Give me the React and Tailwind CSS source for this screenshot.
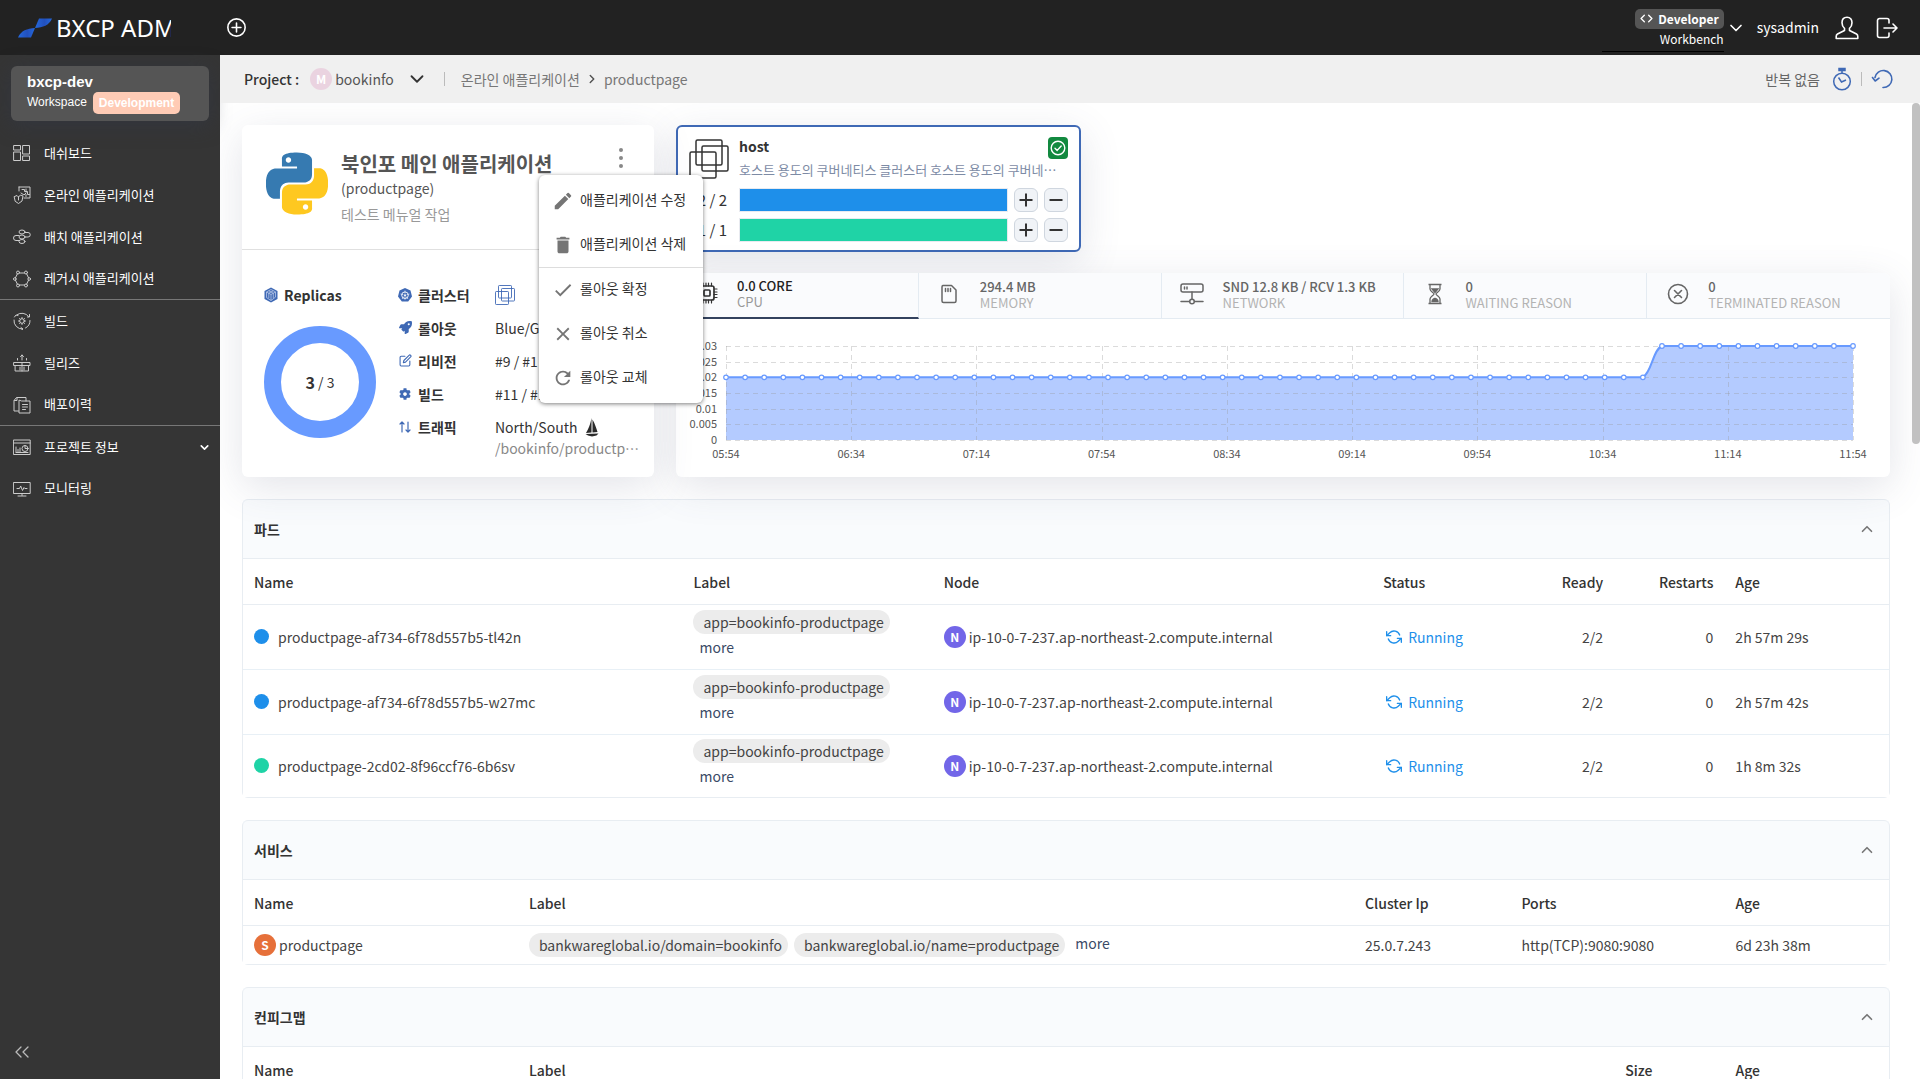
import React from "react";
import { Code, ChevronDown, ChevronUp, ChevronsLeft } from "lucide-react";
import { MdEdit, MdDelete, MdCheck, MdClose, MdRefresh } from "react-icons/md";
import { FaRocket, FaCog } from "react-icons/fa";
import { FiEdit, FiRefreshCcw } from "react-icons/fi";

const BLUE = "#1e8fea";
const GREEN = "#1fd3a6";

/* ---------- drawings ---------- */

function Svg({ size = 18, box = 18, className = "", children, sw = 1 }) {
  return (
    <svg
      width={size}
      height={size}
      viewBox={`0 0 ${box} ${box}`}
      fill="none"
      stroke="currentColor"
      strokeWidth={sw}
      strokeLinejoin="round"
      strokeLinecap="round"
      className={"shrink-0 " + className}
      aria-hidden="true"
    >
      {children}
    </svg>
  );
}

function BrandMark() {
  return (
    <svg width="34" height="20" viewBox="0 0 34 20" className="shrink-0" aria-hidden="true">
      <defs>
        <linearGradient id="mark" x1="0" y1="0" x2="1" y2="0">
          <stop offset="0" stopColor="#2468dc" />
          <stop offset="0.55" stopColor="#2250bd" />
          <stop offset="1" stopColor="#2468dc" />
        </linearGradient>
      </defs>
      <path d="M0 19.5C3 12.5 9 10.500 17 10L13 19.500z" fill="url(#mark)" />
      <path d="M34 0.500C31 7.500 25 9.500 17 10L21 0.500z" fill="url(#mark)" />
    </svg>
  );
}

function PythonLogo() {
  return (
    <svg width="62" height="63" viewBox="0 0 24 24" className="mt-px shrink-0" role="img" aria-label="Python">
      <path
        fill="#367ab1"
        d="M14.25.18l.9.2.73.26.59.3.45.32.34.34.25.34.16.33.1.3.04.26.02.2-.01.13V8.5l-.05.63-.13.55-.21.46-.26.38-.3.31-.33.25-.35.19-.35.14-.33.1-.3.07-.26.04-.21.02H8.77l-.69.05-.59.14-.5.22-.41.27-.33.32-.27.35-.2.36-.15.37-.1.35-.07.32-.04.27-.02.21v3.06H3.17l-.21-.03-.28-.07-.32-.12-.35-.18-.36-.26-.36-.36-.35-.46-.32-.59-.28-.73-.21-.88-.14-1.05-.05-1.23.06-1.22.16-1.04.24-.87.32-.71.36-.57.4-.44.42-.33.42-.24.4-.16.36-.1.32-.05.24-.01h.16l.06.01h8.16v-.83H6.18l-.01-2.75-.02-.37.05-.34.11-.31.17-.28.25-.26.31-.23.38-.2.44-.18.51-.15.58-.12.64-.1.71-.06.77-.04.84-.02 1.27.05zm-6.3 1.98l-.23.33-.08.41.08.41.23.34.33.22.41.09.41-.09.33-.22.23-.34.08-.41-.08-.41-.23-.33-.33-.22-.41-.09-.41.09z"
      />
      <path
        fill="#fec820"
        d="M21.04 6.11l.28.06.32.12.35.18.36.27.36.35.35.47.32.59.28.73.21.88.14 1.04.05 1.23-.06 1.23-.16 1.04-.24.86-.32.71-.36.57-.4.45-.42.33-.42.24-.4.16-.36.09-.32.05-.24.02-.16-.01h-8.22v.82h5.84l.01 2.76.02.36-.05.34-.11.31-.17.29-.25.25-.31.24-.38.2-.44.17-.51.15-.58.13-.64.09-.71.07-.77.04-.84.01-1.27-.04-1.07-.14-.9-.2-.73-.25-.59-.3-.45-.33-.34-.34-.25-.34-.16-.33-.1-.3-.04-.25-.02-.2.01-.13v-5.34l.05-.64.13-.54.21-.46.26-.38.3-.32.33-.24.35-.2.35-.14.33-.1.3-.06.26-.04.21-.02.13-.01h5.84l.69-.05.59-.14.5-.21.41-.28.33-.32.27-.35.2-.36.15-.36.1-.35.07-.32.04-.28.02-.21V6.07h2.09l.14.01zm-6.47 14.25l-.23.33-.08.41.08.41.23.33.33.23.41.08.41-.08.33-.23.23-.33.08-.41-.08-.41-.23-.33-.33-.23-.41-.08-.41.08z"
      />
    </svg>
  );
}

function ClusterSquares({ size = 20, sw = 1.2, className = "" }) {
  return (
    <svg width={size} height={size} viewBox="0 0 40 40" fill="none" stroke="currentColor" strokeWidth={sw} className={"shrink-0 " + className} aria-hidden="true">
      <rect x="7" y="1" width="26" height="25" rx="1.500" />
      <rect x="13" y="7" width="26" height="25" rx="1.500" />
      <rect x="1" y="13" width="26" height="26" rx="1.500" />
    </svg>
  );
}

const DashboardIcon = () => (
  <Svg>
    <path d="M1 1.500h6.500v4.500H1zM1 8h6.500v8.500H1zM10 1.500h6.500v8.500H10zM10 12h6.500v4.500H10z" />
  </Svg>
);
const OnlineIcon = () => (
  <Svg>
    <path d="M6 1h11v11h-6M6 1v4M9 3.500h2.500v2h3v3h2M8 7l3 2 2-2M1.500 10.500l2.500-1 1.500 1.500 2-2 2.500 1-1 5-3.500 2.500-3-2zM5.500 11v3M13 3v3M13 8.500v2" />
  </Svg>
);
const BatchIcon = () => (
  <Svg>
    <ellipse cx="9" cy="4" rx="3" ry="2" />
    <ellipse cx="9" cy="9" rx="3" ry="2" />
    <ellipse cx="9" cy="13.500" rx="3" ry="2" />
    <path d="M12 4.500h3a2 2 0 0 1 0 4.500h-3M6 7.500H3a2.500 2.500 0 0 0 0 5h3" />
  </Svg>
);
const LegacyIcon = () => (
  <Svg>
    <circle cx="5" cy="2.500" r="1.500" />
    <circle cx="13" cy="2.500" r="1.500" />
    <circle cx="1.800" cy="9" r="1.300" />
    <circle cx="16.200" cy="9" r="1.300" />
    <circle cx="5" cy="15.500" r="1.500" />
    <circle cx="13" cy="15.500" r="1.500" />
    <path d="M6.500 3h5M6.500 15h5M4.300 4L2.500 7.700M13.700 4l1.800 3.700M4.300 14l-1.800-3.700M13.700 14l1.800-3.700" />
  </Svg>
);
const BuildIcon = () => (
  <Svg>
    <path d="M4 2.800A8 8 0 0 1 15.500 4.500M17 8.500a8 8 0 0 1-4.500 7.500M9.500 17A8 8 0 0 1 1 8" />
    <circle cx="9" cy="9" r="2.300" />
    <path d="M9 5.500v1M9 11.500v1M5.500 9h1M11.500 9h1M6.500 6.500l.7.700M10.800 10.800l.7.700M11.500 6.500l-.7.700M6.500 11.500l.7-.7M1.500 5l1.500-2 2 .5M16.500 2.500v2.500h-2M8 15.500l2 1.500-1.500 1" />
  </Svg>
);
const ReleaseIcon = () => (
  <Svg>
    <path d="M1 8.500h16v3H1zM2.500 11.500h13v5.500h-13zM9 8.500V17M9 6V1M7.500 2.500L9 1l1.500 1.500M4.500 6V4.500M13.500 6V4.500M7 13v3M11 13v3" />
  </Svg>
);
const HistoryIcon = () => (
  <Svg>
    <path d="M5.500 15H1V4.500L3.500 1.500H9M6 4.500V17h11V5H9zM9 1.500l4 0V5M1.500 4.500h2.500v-2.500M9.500 8.500h5M9.500 11h5M9.500 13.500h3" />
  </Svg>
);
const ProjectIcon = () => (
  <Svg>
    <path d="M.8 2h16.400v14.500H.8zM.8 5h16.400M3 14V9M5 14v-2.500M7 14V10" />
    <circle cx="12" cy="10.500" r="3" />
    <path d="M12 7.500v3h3M3 14.500h12" />
  </Svg>
);
const MonitorIcon = () => (
  <Svg>
    <path d="M.8 2.500h16.400v11H.8zM9 13.500v2M5 16h8M4 8.500h2.500l1.200-2.500 1.800 4.500 1.500-3 .8 1H14" />
  </Svg>
);

const UserIcon = () => (
  <Svg size={24} box={24} sw={1.6}>
    <path d="M12 1.200c-3.300 0-5 2.500-5 5.600 0 2.200 1 4.300 2.500 5.500v2.200L2.500 18c-.9.500-1.300 1.500-1.300 2.500v2h21.600v-2c0-1-.4-2-1.300-2.500l-7-3.500v-2.200C16 11.100 17 9 17 6.800c0-3.100-1.700-5.600-5-5.600z" />
  </Svg>
);
const LogoutIcon = () => (
  <Svg size={22} box={22} sw={1.6}>
    <path d="M13 6V3.500a2 2 0 0 0-2-2H3.500a2 2 0 0 0-2 2v15a2 2 0 0 0 2 2H11a2 2 0 0 0 2-2V16M8 11h13M17 7l4 4-4 4" />
  </Svg>
);
const TimerIcon = () => (
  <svg width="20" height="24" viewBox="0 0 20 24" fill="none" stroke="#3f69b5" strokeWidth="1.500" className="shrink-0" aria-hidden="true">
    <circle cx="10" cy="14.500" r="8.300" />
    <path d="M10 6V3.500M6.500 10.500l3 4.500 4.500-2" />
    <rect x="7" y="1.500" width="6" height="2" fill="#3f69b5" />
  </svg>
);
const UndoIcon = () => (
  <Svg size={22} box={22} sw={1.6} className="text-[#3f69b5]">
    <path d="M12 19.500A8.500 8.500 0 1 0 4 9.500M1.500 9.500l2.700 3.500L8 10.200" />
  </Svg>
);

const CubeIcon = () => (
  <svg width="14" height="16" viewBox="0 0 14 16" className="shrink-0" aria-hidden="true">
    <path d="M7 .5l6.500 3.500v8L7 15.500.5 12V4z" fill="#3f69b5" />
    <path d="M7 2.500l4.500 2.400v5.200L7 13.500 2.500 10.500V5zM2.500 5L7 7.500 11.500 5M7 7.500v6M4.800 3.800l4.500 2.400v5M9.200 3.800L4.800 6.200v5" fill="none" stroke="#c5d3ee" strokeWidth=".7" />
  </svg>
);
const WheelIcon = () => (
  <svg width="14" height="14" viewBox="0 0 14 14" className="shrink-0" aria-hidden="true">
    <path d="M7 0l5.500 2.600L14 8.500 10.200 13.500H3.800L0 8.500l1.500-5.900z" fill="#3f69b5" />
    <circle cx="7" cy="7.200" r="3.300" fill="none" stroke="#fff" strokeWidth=".9" />
    <circle cx="7" cy="7.200" r="1" fill="#fff" />
    <path d="M7 2.500v3M7 8.500v3.300M2.500 6l3 .8M11.500 6l-3 .8M4 11l2-2.500M10 11L8 8.500" stroke="#fff" strokeWidth=".6" />
  </svg>
);
const TrafficIcon = () => (
  <Svg size={14} box={14} sw={1.2} className="text-[#3f69b5]">
    <path d="M4 12V2M2 4l2-2 2 2M10 2v10M8 10l2 2 2-2" />
  </Svg>
);
const SailIcon = () => (
  <svg width="14" height="20" viewBox="0 0 14 20" className="shrink-0" fill="#2b2b2b" aria-hidden="true">
    <path d="M6.500 1v14.500L1 16C3.500 12 5.500 7 6.500 1zM7.500 2.500c2.500 4.500 4 9 5 12.500l-5 .5zM.5 17L13.500 16.500 11.500 18.500 7 19.500 3 18.500z" />
  </svg>
);

const CpuIcon = () => (
  <Svg size={22} box={22} sw={1.7} className="text-[#333]">
    <rect x="4" y="4" width="14" height="14" rx="2" />
    <rect x="8" y="8" width="6" height="6" rx="1" />
    <path d="M7 1v3M10 1v3M12.500 1v3M15.500 1v3M7 18v3M10 18v3M12.500 18v3M15.500 18v3M1 7h3M1 10h3M1 12.500h3M1 15.500h3M18 7h3M18 10h3M18 12.500h3M18 15.500h3" strokeWidth="1.200" />
  </Svg>
);
const MemoryIcon = () => (
  <Svg size={22} box={22} sw={1.5} className="text-[#666]">
    <path d="M5 2.500h8.500L18 7v11a1.500 1.500 0 0 1-1.500 1.500h-11A1.500 1.500 0 0 1 4 18V4a1.500 1.500 0 0 1 1-1.500zM7.500 5.500v3M10 5.500v3M12.500 5.500v3" />
  </Svg>
);
const NetworkIcon = () => (
  <Svg size={24} box={24} sw={1.5} className="text-[#666]">
    <rect x="1" y="2" width="22" height="8" rx="2" />
    <path d="M4.500 5v2M7 5v2M12 10v7M1 19.500h8.500M14.500 19.500H23" />
    <circle cx="12" cy="19.500" r="2.300" />
  </Svg>
);
const HourglassIcon = () => (
  <svg width="22" height="22" viewBox="0 0 22 22" fill="none" stroke="#666" strokeWidth="1.300" className="shrink-0" aria-hidden="true">
    <path d="M4.500 1.500h13M4.500 20.500h13M6 1.500V6c0 2.500 4 3.500 4 5s-4 2.500-4 5v4.500M16 1.500V6c0 2.500-4 3.500-4 5s4 2.500 4 5v4.500" />
    <path d="M8 6h6l-3 3.500zM8 18.500c0-2 2-3 3-3s3 1 3 3z" fill="#666" />
  </svg>
);
const TerminatedIcon = () => (
  <Svg size={22} box={22} sw={1.6} className="text-[#666]">
    <circle cx="11" cy="11" r="9.500" />
    <path d="M7.500 7.500l7 7M14.500 7.500l-7 7" />
  </Svg>
);

/* ---------- header ---------- */

function Header() {
  return (
    <header className="flex h-[55px] shrink-0 items-center bg-[#222222] pr-[22px] pl-[18px] text-white">
      <a href="#home" className="flex w-[209px] items-center gap-1">
        <BrandMark />
        <span className="w-[115px] overflow-hidden font-['Noto_Sans',sans-serif] text-2xl leading-8 whitespace-nowrap">
          BXCP ADM
        </span>
      </a>
      <button type="button" aria-label="Add">
        <Svg size={19} box={18} sw={1.5}>
          <circle cx="9" cy="9" r="8.200" />
          <path d="M9 4.800v8.400M4.800 9h8.400" />
        </Svg>
      </button>
      <div className="ml-auto flex h-full items-center">
        <button type="button" className="flex items-center gap-[2px]">
          <span className="flex w-[122px] flex-col items-end border-b border-black pt-[5px] pb-[2px]">
            <span className="flex h-5 items-center gap-[5px] rounded-[5px] bg-[#555555] px-[5px] text-xs font-bold">
              <Code size={13} strokeWidth={2.5} />
              Developer
            </span>
            <span className="text-xs leading-5">Workbench</span>
          </span>
          <ChevronDown size={20} strokeWidth={2} />
        </button>
        <span className="ml-[11px] pb-[2px] text-sm">sysadmin</span>
        <button type="button" aria-label="Profile" className="ml-4">
          <UserIcon />
        </button>
        <button type="button" aria-label="Log out" className="ml-[17px]">
          <LogoutIcon />
        </button>
      </div>
    </header>
  );
}

/* ---------- sidebar ---------- */

const NAV = [
  [
    ["대쉬보드", DashboardIcon],
    ["온라인 애플리케이션", OnlineIcon],
    ["배치 애플리케이션", BatchIcon],
    ["레거시 애플리케이션", LegacyIcon],
  ],
  [
    ["빌드", BuildIcon],
    ["릴리즈", ReleaseIcon],
    ["배포이력", HistoryIcon],
  ],
  [
    ["프로젝트 정보", ProjectIcon, true],
    ["모니터링", MonitorIcon],
  ],
];

function Sidebar() {
  return (
    <aside className="flex w-[220px] shrink-0 flex-col bg-[#353535] text-white">
      <button
        type="button"
        className="m-[11px] flex h-[55px] flex-col items-start rounded-md bg-[#555555] px-4 pt-[6px] text-left font-['Liberation_Sans',sans-serif] shadow-[0_4px_20px_rgba(50,55,70,0.6)]"
      >
        <span className="text-[15px] leading-5 font-bold">bxcp-dev</span>
        <span className="flex items-center gap-[6px]">
          <span className="-mt-[2px] text-xs">Workspace</span>
          <span className="rounded-[5px] bg-[#ffcbb5] px-[6px] text-xs leading-[22px] font-bold text-white">
            Development
          </span>
        </span>
      </button>
      <nav>
        {NAV.map((group, i) => (
          <ul key={i} className="border-b border-[#777777] last:border-b-0">
            {group.map(([label, Icon, more]) => (
              <li key={label} className="flex h-[42px] last:h-[41px]">
                <a href="#nav" className="flex flex-1 items-center pr-[9px] pl-[13px] text-[13px]">
                  <span className="text-[#cccccc]">
                    <Icon />
                  </span>
                  <span className="ml-[13px]">{label}</span>
                  {more && <ChevronDown size={13} strokeWidth={3} className="ml-auto" />}
                </a>
              </li>
            ))}
          </ul>
        ))}
      </nav>
      <button type="button" aria-label="Collapse" className="mt-auto mb-[15px] ml-[10px] self-start text-[#bbbbbb]">
        <ChevronsLeft size={24} strokeWidth={1.3} />
      </button>
    </aside>
  );
}

/* ---------- project bar ---------- */

function ProjectBar() {
  return (
    <div className="flex h-12 shrink-0 items-center bg-[#f0f0f0] pr-[27px] pl-6 text-sm text-[#666666]">
      <span className="font-medium text-[#333333]">Project :</span>
      <button type="button" className="ml-[11px] flex items-center text-[#555555]">
        <span className="mr-[3px] flex size-[22px] items-center justify-center rounded-full bg-[#ead3e0] text-xs font-bold text-white">
          M
        </span>
        bookinfo
        <ChevronDown size={22} strokeWidth={2} className="ml-3 text-[#333333]" />
      </button>
      <span className="ml-4 h-[14px] w-px bg-[#bbbbbb]" />
      <nav className="ml-4 flex items-center text-[#777777]">
        <a href="#apps">온라인 애플리케이션</a>
        <ChevronDown size={14} strokeWidth={2.5} className="mx-[5px] -rotate-90 text-[#555555]" />
        <a href="#app">productpage</a>
      </nav>
      <div className="ml-auto flex items-center">
        <span>반복 없음</span>
        <button type="button" aria-label="Refresh interval" className="ml-3">
          <TimerIcon />
        </button>
        <span className="mx-[9px] h-[14px] w-px bg-[#bbbbbb]" />
        <button type="button" aria-label="Refresh">
          <UndoIcon />
        </button>
      </div>
    </div>
  );
}

/* ---------- application card ---------- */

const MENU = [
  [
    ["애플리케이션 수정", MdEdit],
    ["애플리케이션 삭제", MdDelete],
  ],
  [
    ["롤아웃 확정", MdCheck],
    ["롤아웃 취소", MdClose],
    ["롤아웃 교체", MdRefresh],
  ],
];

function ActionMenu() {
  return (
    <div
      role="menu"
      className="absolute top-[50px] left-[297px] z-20 w-[164px] rounded-md bg-white pt-1 pb-[3px] shadow-[0_1px_4px_rgba(0,0,0,0.5)]"
    >
      {MENU.map((group, i) => (
        <div key={i} className="border-b border-[#dddddd] last:border-b-0">
          {group.map(([label, Icon]) => (
            <button
              key={label}
              type="button"
              role="menuitem"
              className="flex h-11 w-full items-center gap-[6px] pl-[13px] text-sm whitespace-nowrap text-[#333333]"
            >
              <Icon size={22} className="shrink-0 text-[#757575]" />
              <span className="pb-1">{label}</span>
            </button>
          ))}
        </div>
      ))}
    </div>
  );
}

const CARD_SHADOW = "shadow-[0_10px_40px_rgba(80,90,120,0.16)]";

function Fact({ icon, label, children }) {
  return (
    <>
      <dt className="flex h-[33px] items-center gap-[6px] font-bold text-[#333333]">
        <span className="flex w-[14px] justify-center">{icon}</span>
        {label}
      </dt>
      <dd className="flex h-[33px] items-center gap-2">{children}</dd>
    </>
  );
}

function AppCard() {
  return (
    <section className={"relative w-1/4 shrink-0 rounded-md bg-white " + CARD_SHADOW}>
      <div className="flex h-[125px] border-b border-[#e0e0e0] pt-[26px] pr-[22px] pl-6">
        <PythonLogo />
        <div className="ml-[13px] text-sm">
          <h1 className="text-xl leading-[26px] font-bold text-[#555555]">북인포 메인 애플리케이션</h1>
          <p className="leading-[22px] text-[#555555]">(productpage)</p>
          <p className="pt-[2px] leading-[26px] text-[#999999]">테스트 메뉴얼 작업</p>
        </div>
        <button type="button" aria-label="More actions" className="mt-[-3px] ml-auto h-5 text-[#888888]">
          <svg width="22" height="20" viewBox="0 0 22 20" fill="currentColor" aria-hidden="true">
            <circle cx="11" cy="2" r="2" />
            <circle cx="11" cy="10" r="2" />
            <circle cx="11" cy="18" r="2" />
          </svg>
        </button>
      </div>
      <div className="flex pt-7 pr-[14px] pl-[22px] text-sm text-[#333333]">
        <div>
          <h2 className="flex h-[33px] items-center gap-[6px] font-bold">
            <CubeIcon />
            Replicas
          </h2>
          <div className="mt-[15px] flex size-28 items-center justify-center rounded-full border-[17px] border-[#689aff]">
            <strong className="text-base">3</strong>&nbsp;/ 3
          </div>
        </div>
        <dl className="ml-[22px] grid min-w-0 flex-1 grid-cols-[97px_minmax(0,1fr)] content-start">
          <Fact icon={<WheelIcon />} label="클러스터">
            <ClusterSquares size={20} sw={1.8} className="text-[#3f69b5]" />
          </Fact>
          <Fact icon={<FaRocket size={13} className="text-[#3f69b5]" />} label="롤아웃">
            Blue/Green
          </Fact>
          <Fact icon={<FiEdit size={13} className="text-[#3f69b5]" />} label="리비전">
            #9 / #1
          </Fact>
          <Fact icon={<FaCog size={12} className="text-[#3f69b5]" />} label="빌드">
            #11 / #1
          </Fact>
          <Fact icon={<TrafficIcon />} label="트래픽">
            North/South
            <SailIcon />
          </Fact>
          <dd className="col-start-2 -mt-1 truncate leading-[18px] text-[#888888]">/bookinfo/productpage</dd>
        </dl>
      </div>
      <ActionMenu />
    </section>
  );
}

/* ---------- host card ---------- */

function StepButton({ minus, label }) {
  return (
    <button
      type="button"
      aria-label={label}
      className="flex size-6 items-center justify-center rounded-[6px] border border-[#cfd6df] bg-[#f0f3f7]"
    >
      <svg width="14" height="14" viewBox="0 0 14 14" stroke="#333" strokeWidth="2" aria-hidden="true">
        <path d={minus ? "M0.500 7h13" : "M0.500 7h13M7 .5v13"} />
      </svg>
    </button>
  );
}

function HostCard() {
  const rows = [
    ["2", "/ 2", BLUE, 100],
    ["1", "/ 1", GREEN, 100],
  ];
  return (
    <section className={"w-1/3 rounded-md border-2 border-[#3f69b5] bg-white px-[11px] py-2 " + CARD_SHADOW}>
      <div className="flex">
        <ClusterSquares size={40} sw={1.5} className="mt-1 text-[#333333]" />
        <div className="ml-[10px] min-w-0 flex-1">
          <div className="flex h-6 items-start justify-between">
            <h2 className="text-sm leading-[22px] font-bold text-[#333333]">host</h2>
            <span className="mt-[2px] flex h-[22px] w-5 items-center justify-center rounded bg-[#12893f]">
              <Svg size={16} box={16} sw={1.4} className="text-white">
                <circle cx="8" cy="8" r="6.800" />
                <path d="M5 8.200l2.200 2.200L11.200 6" />
              </Svg>
            </span>
          </div>
          <p className="truncate text-[13px] leading-[22px] text-[#7d8ba5]">
            호스트 용도의 쿠버네티스 클러스터 호스트 용도의 쿠버네티스 클러스터
          </p>
        </div>
      </div>
      <div className="mt-[7px] flex flex-col gap-[6px]">
        {rows.map(([n, total, color, pct]) => (
          <div key={color} className="flex h-6 items-center">
            <span className="w-[50px] pr-[12px] text-right text-[15px] whitespace-nowrap text-[#333333]">
              {n} {total}
            </span>
            <div className="h-6 flex-1 border border-[#e8eaf0]">
              <div className="h-full" style={{ width: pct + "%", background: color }} />
            </div>
            <span className="ml-[6px] flex gap-[6px]">
              <StepButton label="Scale up" />
              <StepButton label="Scale down" minus />
            </span>
          </div>
        ))}
      </div>
    </section>
  );
}

/* ---------- metrics ---------- */

const METRICS = [
  ["0.0 CORE", "CPU", CpuIcon],
  ["294.4 MB", "MEMORY", MemoryIcon],
  ["SND 12.8 KB / RCV 1.3 KB", "NETWORK", NetworkIcon],
  ["0", "WAITING REASON", HourglassIcon],
  ["0", "TERMINATED REASON", TerminatedIcon],
];

const X0 = 50;
const X1 = 1177;
const Y0 = 121;
const Y1 = 27;
const Y_TICKS = ["0", "0.005", "0.01", "0.015", "0.02", "0.025", "0.03"];
const X_TICKS = ["05:54", "06:34", "07:14", "07:54", "08:34", "09:14", "09:54", "10:34", "11:14", "11:54"];
const POINTS = Array.from({ length: 60 }, (_, i) => [
  X0 + ((X1 - X0) * i) / 59,
  i < 49 ? Y0 - ((Y0 - Y1) * 2) / 3 : Y1,
]);

function UsageChart() {
  const [xa, ya] = POINTS[48];
  const [xb, yb] = POINTS[49];
  const xm = (xa + xb) / 2;
  const line = `M${X0} ${ya}H${xa}C${xm} ${ya - 6} ${xm} ${yb + 4} ${xb} ${yb}H${X1}`;
  return (
    <svg viewBox="0 0 1214 158" className="block w-full" role="img" aria-label="CPU usage">
      <path d={`${line}V${Y0}H${X0}Z`} fill="#b4cbff" />
      <g stroke="#999999" strokeOpacity="0.35" strokeDasharray="5 4">
        {Y_TICKS.map((t, i) => {
          const y = Math.round(Y0 - ((Y0 - Y1) * i) / 6) + 0.5;
          return <line key={t} x1={X0} x2={X1} y1={y} y2={y} />;
        })}
        {X_TICKS.map((t, i) => {
          const x = Math.round(X0 + ((X1 - X0) * i) / 9) + 0.5;
          return <line key={t} x1={x} x2={x} y1={Y1} y2={Y0} />;
        })}
      </g>
      <path d={line} fill="none" stroke="#689aff" strokeWidth="2" />
      <g fill="#ffffff" stroke="#689aff" strokeWidth="1.200">
        {POINTS.map(([x, y]) => (
          <circle key={x} cx={x} cy={y} r="2.300" />
        ))}
      </g>
      <g fill="#555555" fontSize="11">
        {Y_TICKS.map((t, i) => (
          <text key={t} x={X0 - 9} y={Y0 + 4 - ((Y0 - Y1) * i) / 6} textAnchor="end">
            {t}
          </text>
        ))}
        {X_TICKS.map((t, i) => (
          <text key={t} x={X0 + ((X1 - X0) * i) / 9} y={Y0 + 18} textAnchor="middle">
            {t}
          </text>
        ))}
      </g>
    </svg>
  );
}

function MetricsCard() {
  return (
    <section className={"overflow-hidden rounded-md bg-white " + CARD_SHADOW}>
      <div role="tablist" className="grid h-[46px] grid-cols-5 border-b border-[#e4ebf2] bg-[#fafbfd]">
        {METRICS.map(([value, name, Icon], i) => (
          <button
            key={name}
            type="button"
            role="tab"
            aria-selected={i === 0}
            className={
              "flex h-[46px] items-center border-r text-left text-[13px] leading-4 last:border-r-0 " +
              (i === 0 ? "border-r-[#e4ebf2] border-b-2 border-b-[#33425e]" : "border-[#e4ebf2]")
            }
          >
            <span className="flex w-[61px] justify-center pb-1">
              <Icon />
            </span>
            <span className="pb-[2px]">
              <span className={"block font-medium " + (i === 0 ? "text-[#222222]" : "text-[#666666]")}>{value}</span>
              <span className={"block " + (i === 0 ? "text-[#999999]" : "text-[#b3b3b3]")}>{name}</span>
            </span>
          </button>
        ))}
      </div>
      <UsageChart />
    </section>
  );
}

/* ---------- tables ---------- */

function Section({ title, children }) {
  return (
    <section className="mt-[22px] rounded-md border border-[#e8edf2]">
      <div className="flex h-[59px] items-center justify-between border-b border-[#e8edf2] bg-[#f0f4fa]/40 pr-[13px] pl-[11px]">
        <h2 className="text-sm font-bold text-[#333333]">{title}</h2>
        <button type="button" aria-label={"Collapse " + title} className="text-[#777777]">
          <ChevronUp size={18} strokeWidth={2.2} />
        </button>
      </div>
      {children}
    </section>
  );
}

function Head({ cols }) {
  return (
    <thead>
      <tr className="h-[45px] border-b border-[#e8edf2]">
        {cols.map(([name, cls]) => (
          <th key={name} scope="col" className={"px-[11px] pt-[2px] font-medium text-[#333333] " + cls}>
            {name}
          </th>
        ))}
      </tr>
    </thead>
  );
}

function Pill({ children }) {
  return (
    <span className="block h-6 w-fit rounded-full bg-[#ececec] pr-[6px] pl-[10px] leading-6 whitespace-nowrap">
      {children}
    </span>
  );
}

function Kind({ letter, className }) {
  return (
    <span className={"flex size-[22px] shrink-0 items-center justify-center rounded-full text-xs font-bold text-white " + className}>
      {letter}
    </span>
  );
}

const TABLE = "w-full table-fixed bg-white text-left text-sm text-[#444444]";

const PODS = [
  ["productpage-af734-6f78d557b5-tl42n", BLUE, "2h 57m 29s"],
  ["productpage-af734-6f78d557b5-w27mc", BLUE, "2h 57m 42s"],
  ["productpage-2cd02-8f96ccf76-6b6sv", GREEN, "1h 8m 32s"],
];

function Pods() {
  return (
    <Section title="파드">
      <table className={TABLE}>
        <Head
          cols={[
            ["Name", "w-[26.7%]"],
            ["Label", "w-[15.2%]"],
            ["Node", "w-[26.7%]"],
            ["Status", "w-[8%]"],
            ["Ready", "w-[6.7%] text-right"],
            ["Restarts", "w-[6.7%] text-right"],
            ["Age", "w-[10%]"],
          ]}
        />
        <tbody>
          {PODS.map(([name, color, age]) => (
            <tr key={name} className="h-[65px] border-b border-[#e8f0f6] last:h-[63px] last:border-b-0">
              <td className="px-[11px]">
                <span className="flex items-center gap-[9px]">
                  <span className="size-[15px] rounded-full" style={{ background: color }} />
                  {name}
                </span>
              </td>
              <td className="px-[11px] pb-1">
                <Pill>app=bookinfo-productpage</Pill>
                <button type="button" className="ml-[6px] block leading-[26px] text-[#3a4a66]">
                  more
                </button>
              </td>
              <td className="px-[11px]">
                <span className="flex items-center gap-[3px]">
                  <Kind letter="N" className="bg-[#7266e8]" />
                  ip-10-0-7-237.ap-northeast-2.compute.internal
                </span>
              </td>
              <td className="px-[11px]">
                <span className="flex items-center gap-[6px] pl-[3px] text-[#1e8fea]">
                  <FiRefreshCcw size={16} className="shrink-0" />
                  Running
                </span>
              </td>
              <td className="px-[11px] text-right">2/2</td>
              <td className="px-[11px] text-right">0</td>
              <td className="px-[11px]">{age}</td>
            </tr>
          ))}
        </tbody>
      </table>
    </Section>
  );
}

function Services() {
  return (
    <Section title="서비스">
      <table className={TABLE}>
        <Head
          cols={[
            ["Name", "w-[16.7%]"],
            ["Label", "w-[50.8%]"],
            ["Cluster Ip", "w-[9.5%]"],
            ["Ports", "w-[13%]"],
            ["Age", "w-[10%]"],
          ]}
        />
        <tbody>
          <tr className="h-[39px]">
            <td className="px-[11px]">
              <span className="flex items-center gap-[3px]">
                <Kind letter="S" className="bg-[#e6703a]" />
                productpage
              </span>
            </td>
            <td className="px-[11px]">
              <span className="flex items-center gap-[6px]">
                <Pill>bankwareglobal.io/domain=bookinfo</Pill>
                <Pill>bankwareglobal.io/name=productpage</Pill>
                <button type="button" className="ml-1 pb-1 text-[#3a4a66]">
                  more
                </button>
              </span>
            </td>
            <td className="px-[11px]">25.0.7.243</td>
            <td className="px-[11px]">http(TCP):9080:9080</td>
            <td className="px-[11px]">6d 23h 38m</td>
          </tr>
        </tbody>
      </table>
    </Section>
  );
}

function ConfigMaps() {
  return (
    <Section title="컨피그맵">
      <table className={TABLE}>
        <Head
          cols={[
            ["Name", "w-[16.7%]"],
            ["Label", "w-[62.9%]"],
            ["Size", "w-[6.7%] text-right"],
            ["Age", "w-[13.7%] pl-[72px]"],
          ]}
        />
      </table>
    </Section>
  );
}

export default function App() {
  return (
    <div className="flex h-screen flex-col overflow-hidden bg-white font-['Noto_Sans_CJK_KR',sans-serif] text-sm">
      <Header />
      <div className="flex min-h-0 flex-1">
        <Sidebar />
        <div className="flex min-w-0 flex-1 flex-col">
          <ProjectBar />
          <main className="relative min-h-0 flex-1 overflow-hidden pt-[22px] pr-[30px] pl-[22px]">
            <div className="flex gap-[22px]">
              <AppCard />
              <div className="flex min-w-0 flex-1 flex-col gap-[21px]">
                <HostCard />
                <MetricsCard />
              </div>
            </div>
            <Pods />
            <Services />
            <ConfigMaps />
            <div className="absolute top-0 right-0 h-[341px] w-2 rounded-full bg-[#c1c1c1]" />
          </main>
        </div>
      </div>
    </div>
  );
}
